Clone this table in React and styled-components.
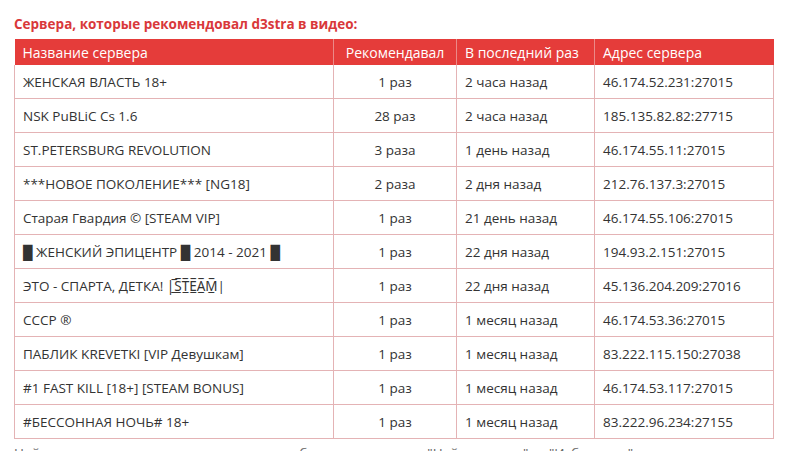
import React from "react";
import styled, { createGlobalStyle } from "styled-components";

const GlobalStyle = createGlobalStyle`
  body {
    margin: 0;
    background: #fff;
    font-family: "Open Sans", "Noto Sans", sans-serif;
    color: #333;
  }
`;

const servers = [
  { name: "ЖЕНСКАЯ ВЛАСТЬ 18+", count: "1 раз", last: "2 часа назад", addr: "46.174.52.231:27015" },
  { name: "NSK PuBLiC Cs 1.6", count: "28 раз", last: "2 часа назад", addr: "185.135.82.82:27715" },
  { name: "ST.PETERSBURG REVOLUTION", count: "3 раза", last: "1 день назад", addr: "46.174.55.11:27015" },
  { name: "***НОВОЕ ПОКОЛЕНИЕ*** [NG18]", count: "2 раза", last: "2 дня назад", addr: "212.76.137.3:27015" },
  { name: "Старая Гвардия © [STEAM VIP]", count: "1 раз", last: "21 день назад", addr: "46.174.55.106:27015" },
  { name: "█ ЖЕНСКИЙ ЭПИЦЕНТР █ 2014 - 2021 █", count: "1 раз", last: "22 дня назад", addr: "194.93.2.151:27015" },
  { name: "ЭТО - СПАРТА, ДЕТКА! |̲̅S̲̅T̲̅E̲̅A̲̅M̲̅|", count: "1 раз", last: "22 дня назад", addr: "45.136.204.209:27016" },
  { name: "СССР ®", count: "1 раз", last: "1 месяц назад", addr: "46.174.53.36:27015" },
  { name: "ПАБЛИК KREVETKI [VIP Девушкам]", count: "1 раз", last: "1 месяц назад", addr: "83.222.115.150:27038" },
  { name: "#1 FAST KILL [18+] [STEAM BONUS]", count: "1 раз", last: "1 месяц назад", addr: "46.174.53.117:27015" },
  { name: "#БЕССОННАЯ НОЧЬ# 18+", count: "1 раз", last: "1 месяц назад", addr: "83.222.96.234:27155" },
];

const Page = styled.div`
  padding: 15px 14px 0;
  width: 759px;
`;

const Title = styled.h3`
  margin: 0 0 6px;
  font-size: 13.5px;
  line-height: 18px;
  font-weight: 700;
  color: #d9383a;
`;

const Table = styled.table`
  width: 759px;
  border-collapse: collapse;
  table-layout: fixed;
  font-size: 13.5px;
`;

const HeadCell = styled.th`
  background: #e53c3a;
  color: #fff;
  font-weight: 400;
  font-size: 14px;
  height: 26px;
  padding: 0 8px;
  text-align: ${(p) => (p.$center ? "center" : "left")};
  border-left: 1px solid #eb8a88;
  &:first-child {
    border-left: none;
  }
`;

const Row = styled.tr`
  border-bottom: 1px solid #e4b3b5;
`;

const Cell = styled.td`
  height: 33px;
  padding: 0 8px;
  border-left: 1px solid #e4b3b5;
  border-right: 1px solid #e4b3b5;
  text-align: ${(p) => (p.$center ? "center" : "left")};
  white-space: nowrap;
  overflow: hidden;
`;

const Note = styled.p`
  margin: 5px 0 0;
  font-size: 13.5px;
  line-height: 18px;
  color: #666;
  white-space: nowrap;
`;

export default function App() {
  return (
    <>
      <GlobalStyle />
      <Page>
        <Title>Сервера, которые рекомендовал d3stra в видео:</Title>
        <Table>
          <colgroup>
            <col style={{ width: 319 }} />
            <col style={{ width: 123 }} />
            <col style={{ width: 138 }} />
            <col style={{ width: 179 }} />
          </colgroup>
          <thead>
            <tr>
              <HeadCell>Название сервера</HeadCell>
              <HeadCell $center>Рекомендавал</HeadCell>
              <HeadCell>В последний раз</HeadCell>
              <HeadCell>Адрес сервера</HeadCell>
            </tr>
          </thead>
          <tbody>
            {servers.map((s) => (
              <Row key={s.addr}>
                <Cell>{s.name}</Cell>
                <Cell $center>{s.count}</Cell>
                <Cell>{s.last}</Cell>
                <Cell>{s.addr}</Cell>
              </Row>
            ))}
          </tbody>
        </Table>
        <Note>
          Найти сервер можно через консоль или добавив его в список "Найти сервер" → "Избранное"
        </Note>
      </Page>
    </>
  );
}
